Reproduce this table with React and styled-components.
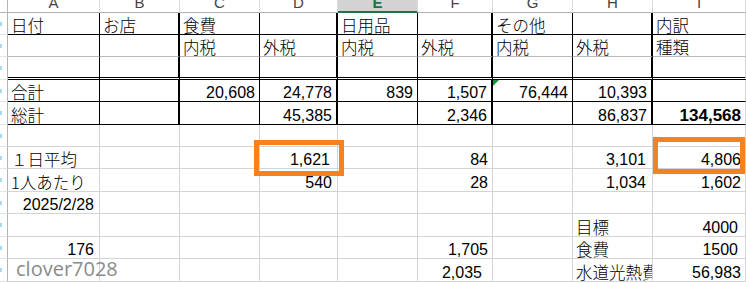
import React from 'react'
import styled, { createGlobalStyle, css } from 'styled-components'

const GlobalStyle = createGlobalStyle`
  html, body {
    margin: 0;
    padding: 0;
    background: #fff;
    overflow: hidden;
  }
`

const COLS = [
  { key: 'A', w: 92, right: 'thin' },
  { key: 'B', w: 80, right: 'thick' },
  { key: 'C', w: 80, right: 'thin' },
  { key: 'D', w: 78, right: 'thick' },
  { key: 'E', w: 80, right: 'thin' },
  { key: 'F', w: 75, right: 'thick' },
  { key: 'G', w: 80, right: 'thin' },
  { key: 'H', w: 80, right: 'thick' },
  { key: 'I', w: 93, right: null },
]

const ROW_HEIGHTS = [22, 22, 23, 22, 23, 22, 22, 23, 22, 23, 22, 23]

// bottom border of the framed block (rows 1-5)
const FRAME_BOTTOM = { 1: 'black', 2: 'mid', 3: 'double', 4: 'black', 5: 'black' }

const L = (t) => ({ t, a: 'l', jp: true })
const R = (t, extra = {}) => ({ t, a: 'r', ...extra })

const ROWS = [
  { A: L('日付'), B: L('お店'), C: L('食費'), E: L('日用品'), G: L('その他'), I: L('内訳') },
  { C: L('内税'), D: L('外税'), E: L('内税'), F: L('外税'), G: L('内税'), H: L('外税'), I: L('種類') },
  {},
  {
    A: L('合計'), C: R('20,608'), D: R('24,778'), E: R('839'), F: R('1,507'),
    G: R('76,444', { flag: true }), H: R('10,393'),
  },
  { A: L('総計'), D: R('45,385'), F: R('2,346'), H: R('86,837'), I: R('134,568', { bold: true }) },
  {},
  { A: L('１日平均'), D: R('1,621', { pr: 7 }), F: R('84'), H: R('3,101', { pr: 6 }), I: R('4,806') },
  { A: L('1人あたり'), D: R('540', { pr: 5 }), F: R('28'), H: R('1,034', { pr: 6 }), I: R('1,602') },
  { A: R('2025/2/28', { pr: 5 }) },
  { H: L('目標'), I: R('4000', { pr: 7 }) },
  { A: R('176', { pr: 5 }), F: R('1,705'), H: L('食費'), I: R('1500', { pr: 7 }) },
  { F: R('2,035', { pr: 10 }), H: L('水道光熱費'), I: R('56,983') },
]

const GRID = '#d4d4d4'

const rightBorder = (kind) => {
  if (kind === 'thick') return '2px solid #000'
  if (kind === 'thin') return '1px solid #000'
  return `1px solid ${GRID}`
}

const bottomBorder = (kind) => {
  if (kind === 'black') return '1px solid #000'
  if (kind === 'double') return '3px double #000'
  if (kind === 'mid') return '1px solid #b9b9b9'
  return `1px solid ${GRID}`
}

export default function App() {
  return (
    <>
      <GlobalStyle />
      <Sheet>
        <Corner />
        {COLS.map((c) => (
          <ColHead key={c.key} $active={c.key === 'E'}>{c.key}</ColHead>
        ))}
        {ROWS.map((row, ri) => {
          const framed = ri < 5
          return (
            <React.Fragment key={ri}>
              <RowHead><Tick /></RowHead>
              {COLS.map((c) => {
                const cell = row[c.key]
                return (
                  <Cell
                    key={c.key}
                    $align={cell?.a}
                    $pr={cell?.pr}
                    $bold={cell?.bold}
                    $flag={cell?.flag}
                    $right={framed ? c.right : null}
                    $bottom={framed ? FRAME_BOTTOM[ri + 1] : null}
                  >
                    {cell?.jp ? <Jp>{cell.t}</Jp> : cell?.t}
                  </Cell>
                )
              })}
            </React.Fragment>
          )
        })}
        <Highlight $x={254} $y={140} $w={90} $h={36} />
        <Highlight $x={653} $y={137} $w={92} $h={37} />
        <Watermark>clover7028</Watermark>
      </Sheet>
    </>
  )
}

const Sheet = styled.div`
  position: relative;
  display: grid;
  grid-template-columns: 8px ${COLS.map((c) => `${c.w}px`).join(' ')};
  grid-template-rows: 13px ${ROW_HEIGHTS.map((h) => `${h}px`).join(' ')};
  width: 746px;
  height: 283px;
  overflow: hidden;
  font-family: "Liberation Sans", "Noto Sans CJK JP", sans-serif;
  color: #000;
`

const Corner = styled.div`
  box-sizing: border-box;
  border-right: 1px solid #b4b4b4;
  border-bottom: 1px solid #b4b4b4;
`

const ColHead = styled.div`
  box-sizing: border-box;
  display: flex;
  align-items: flex-end;
  justify-content: center;
  overflow: hidden;
  padding-bottom: 2px;
  font-family: "Liberation Sans", sans-serif;
  font-size: 15px;
  line-height: 1;
  color: #444;
  background: #fff;
  border-right: 1px solid #dadada;
  border-bottom: 1px solid #b4b4b4;

  ${(p) => p.$active && css`
    background: #d3d3d3;
    color: #217346;
    font-weight: 700;
    border-bottom: 2px solid #217346;
    padding-bottom: 1px;
  `}
`

const RowHead = styled.div`
  box-sizing: border-box;
  display: flex;
  align-items: center;
  border-right: 1px solid #b4b4b4;
  border-bottom: 1px solid #e2e2e2;
`

const Tick = styled.span`
  width: 2px;
  height: 4px;
  background: #a9d9ee;
`

const Cell = styled.div`
  position: relative;
  box-sizing: border-box;
  display: flex;
  align-items: flex-end;
  justify-content: ${(p) => (p.$align === 'r' ? 'flex-end' : 'flex-start')};
  padding: 0 ${(p) => p.$pr ?? 4}px 0 3px;
  overflow: hidden;
  white-space: nowrap;
  font-size: ${(p) => (p.$bold ? 17 : 16)}px;
  font-weight: ${(p) => (p.$bold ? 700 : 400)};
  line-height: 1;
  border-right: ${(p) => rightBorder(p.$right)};
  border-bottom: ${(p) => bottomBorder(p.$bottom)};

  ${(p) => p.$flag && css`
    &::before {
      content: '';
      position: absolute;
      top: 0;
      left: 0;
      border-top: 6px solid #1f8f3a;
      border-right: 6px solid transparent;
    }
  `}
`

const Jp = styled.span`
  font-family: "Noto Sans CJK JP", "Liberation Sans", sans-serif;
  font-weight: 300;
  font-size: 16.5px;
  line-height: 1;
  padding-bottom: 1px;
`

const Highlight = styled.div`
  position: absolute;
  left: ${(p) => p.$x}px;
  top: ${(p) => p.$y}px;
  width: ${(p) => p.$w}px;
  height: ${(p) => p.$h}px;
  box-sizing: border-box;
  border: 5px solid #f5821f;
  pointer-events: none;
`

const Watermark = styled.div`
  position: absolute;
  left: 16px;
  top: 259px;
  font-family: "Open Sans", sans-serif;
  font-size: 20px;
  line-height: 1;
  color: #8b8b8b;
`
